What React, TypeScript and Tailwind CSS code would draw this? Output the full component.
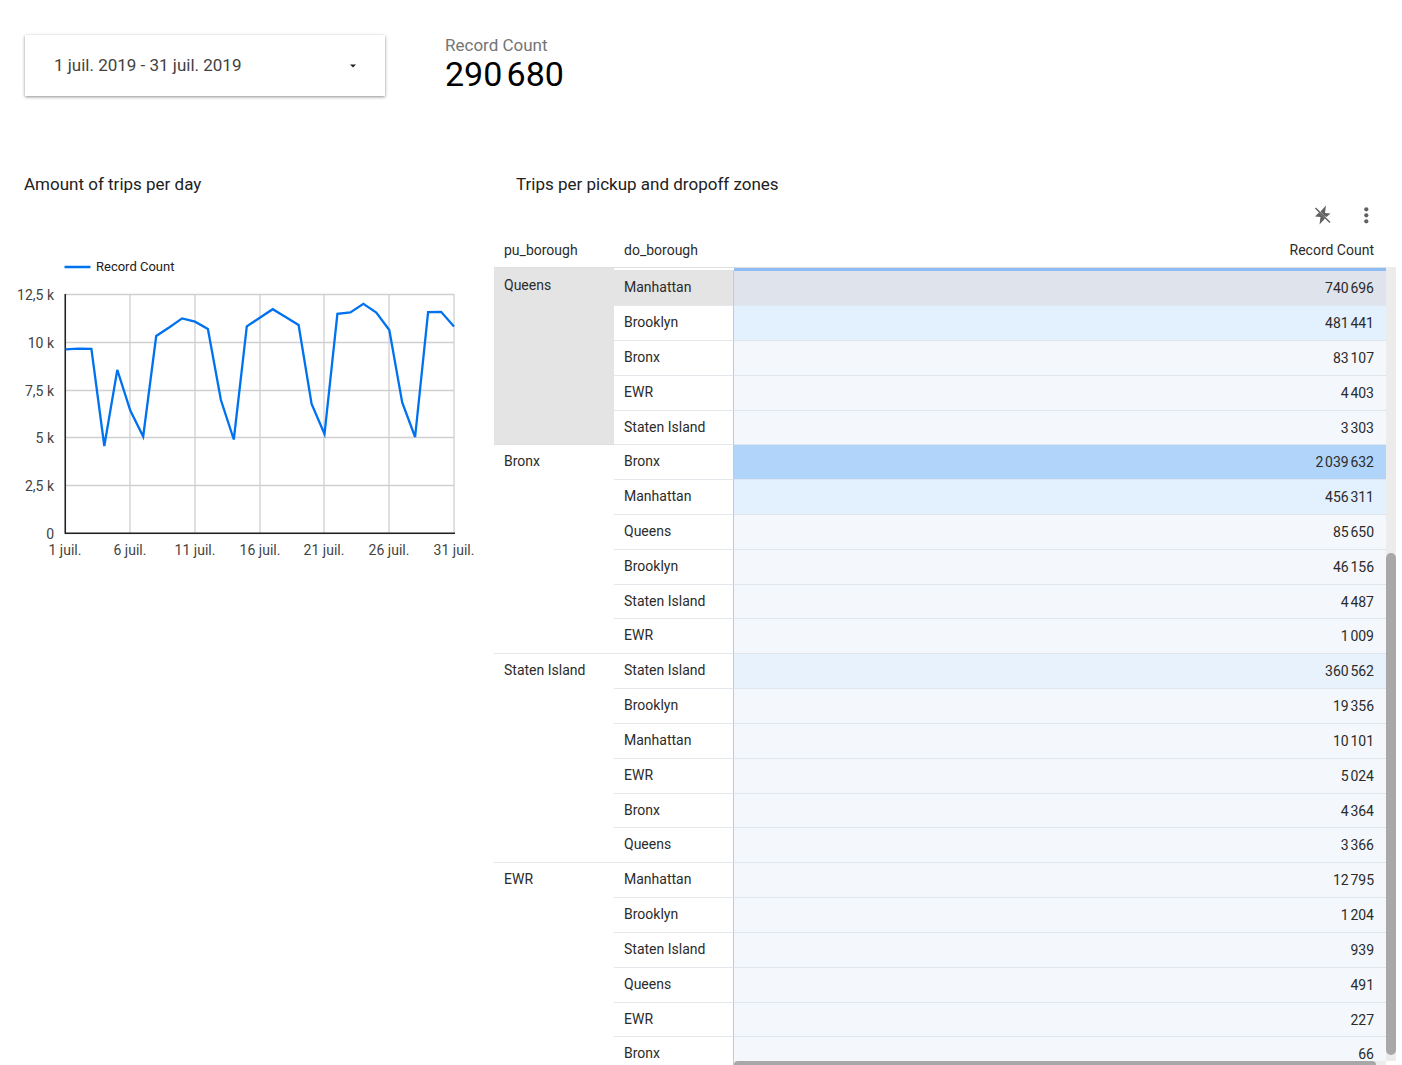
import React from "react";

type Row = { zone: string; count: string; tone: string };
type Group = { borough: string; rows: Row[] };

const PALE = "bg-[#f4f8fd]";
const LIGHT = "bg-[#e3f0fd]";

const groups: Group[] = [
  {
    borough: "Queens",
    rows: [
      { zone: "Manhattan", count: "740696", tone: "bg-[#dfe3eb]" },
      { zone: "Brooklyn", count: "481441", tone: LIGHT },
      { zone: "Bronx", count: "83107", tone: PALE },
      { zone: "EWR", count: "4403", tone: PALE },
      { zone: "Staten Island", count: "3303", tone: PALE },
    ],
  },
  {
    borough: "Bronx",
    rows: [
      { zone: "Bronx", count: "2039632", tone: "bg-[#b0d4fa]" },
      { zone: "Manhattan", count: "456311", tone: LIGHT },
      { zone: "Queens", count: "85650", tone: PALE },
      { zone: "Brooklyn", count: "46156", tone: PALE },
      { zone: "Staten Island", count: "4487", tone: PALE },
      { zone: "EWR", count: "1009", tone: PALE },
    ],
  },
  {
    borough: "Staten Island",
    rows: [
      { zone: "Staten Island", count: "360562", tone: "bg-[#e8f2fd]" },
      { zone: "Brooklyn", count: "19356", tone: PALE },
      { zone: "Manhattan", count: "10101", tone: PALE },
      { zone: "EWR", count: "5024", tone: PALE },
      { zone: "Bronx", count: "4364", tone: PALE },
      { zone: "Queens", count: "3366", tone: PALE },
    ],
  },
  {
    borough: "EWR",
    rows: [
      { zone: "Manhattan", count: "12795", tone: PALE },
      { zone: "Brooklyn", count: "1204", tone: PALE },
      { zone: "Staten Island", count: "939", tone: PALE },
      { zone: "Queens", count: "491", tone: PALE },
      { zone: "EWR", count: "227", tone: PALE },
      { zone: "Bronx", count: "66", tone: PALE },
    ],
  },
];

const group3 = (n: string) => n.replace(/\B(?=(\d{3})+$)/g, "\u202f");

const trips = [
  9630, 9665, 9655, 4560, 8550, 6420, 5060, 10325, 10770, 11250, 11075, 10690, 6970, 4900, 10830, 11285,
  11730, 11320, 10900, 6760, 5190, 11490, 11555, 12010, 11555, 10640, 6840, 5030, 11570, 11595, 10830,
];

const yTicks = [
  { label: "12,5 k", y: 294 },
  { label: "10 k", y: 342 },
  { label: "7,5 k", y: 390 },
  { label: "5 k", y: 437 },
  { label: "2,5 k", y: 485 },
  { label: "0", y: 533 },
];
const xTicks = [
  { label: "1 juil.", x: 65 },
  { label: "6 juil.", x: 130 },
  { label: "11 juil.", x: 195 },
  { label: "16 juil.", x: 260 },
  { label: "21 juil.", x: 324 },
  { label: "26 juil.", x: 389 },
  { label: "31 juil.", x: 454 },
];

function TripsChart() {
  const points = trips
    .map((v, i) => `${(65.5 + (i * 388.5) / 30).toFixed(1)},${(533 - (v * 238.5) / 12500).toFixed(1)}`)
    .join(" ");
  return (
    <svg viewBox="0 250 494 320" className="block w-full" role="img" aria-label="Amount of trips per day">
      <path d="M64.500 267h26" stroke="#0072f0" strokeWidth="2.500" />
      <text x="96" y="271" fontSize="13" fill="#212121">Record Count</text>
      <g stroke="#d0d0d0" strokeWidth="1.300">
        {yTicks.map((t) => (
          <path key={t.label} d={`M65 ${t.y + 0.5}H454`} />
        ))}
        {xTicks.map((t) => (
          <path key={t.label} d={`M${t.x} 294V533`} />
        ))}
      </g>
      <path d="M65.300 294V533.300H455" fill="none" stroke="#222" strokeWidth="1.500" />
      <polyline points={points} fill="none" stroke="#0072f0" strokeWidth="2.300" />
      <g fontSize="14" fill="#424242">
        {yTicks.map((t) => (
          <text key={t.label} x="54" y={t.y + 6} textAnchor="end">{t.label}</text>
        ))}
        {xTicks.map((t) => (
          <text key={t.label} x={t.x} y="555" textAnchor="middle">{t.label}</text>
        ))}
      </g>
    </svg>
  );
}

function BoroughTable() {
  return (
    <table className="w-full table-fixed border-separate border-spacing-0 text-sm text-[#2b2b2b]">
      <colgroup>
        <col className="w-[120px]" />
        <col className="w-[120px]" />
        <col />
      </colgroup>
      <thead>
        <tr className="h-[37px] text-left">
          <th scope="col" className="border-b border-[#e0e0e0] px-[10px] pt-[2px] font-normal">pu_borough</th>
          <th scope="col" className="border-b border-[#e0e0e0] px-[10px] pt-[2px] font-normal">do_borough</th>
          <th scope="col" className="border-b border-[#e0e0e0] px-3 pt-[2px] text-right font-normal">Record Count</th>
        </tr>
      </thead>
      {groups.map((g, gi) => (
        <tbody key={g.borough}>
          {gi === 0 && (
            <tr className="h-[3px]">
              <th
                scope="rowgroup"
                rowSpan={g.rows.length + 1}
                className="border-b border-[#e0e0e0] bg-[#e4e4e4] px-[10px] pt-[7px] text-left align-top font-normal"
              >
                {g.borough}
              </th>
              <td className="border-b border-[#e4e4e4] p-0" />
              <td className="bg-[#8dbdf3] p-0" />
            </tr>
          )}
          {g.rows.map((r, i) => (
            <tr key={r.zone} className={i === 4 ? "h-[34px]" : "h-[35px]"}>
              {gi > 0 && i === 0 && (
                <th
                  scope="rowgroup"
                  rowSpan={g.rows.length}
                  className="border-b border-[#e4e8ec] px-[10px] pt-[6px] text-left align-top font-normal"
                >
                  {g.borough}
                </th>
              )}
              <td
                className={`border-r border-b border-r-[#c6c8ca] border-b-[#e4e8ec] px-[10px] pt-[6px] pb-0 align-top ${
                  gi === 0 && i === 0 ? "bg-[#e4e4e4]" : ""
                }`}
              >
                {r.zone}
              </td>
              <td className={`border-b border-[#dfe5ec] px-3 py-0 text-right ${r.tone}`}>{group3(r.count)}</td>
            </tr>
          ))}
        </tbody>
      ))}
    </table>
  );
}

export default function App() {
  return (
    <main className="flex h-screen flex-col overflow-hidden bg-white font-['Roboto',sans-serif] text-[#212121]">
      <header className="flex items-start gap-[60px] pt-[35px] pl-[25px]">
        <button
          type="button"
          className="flex h-[61px] w-[360px] items-center justify-between bg-white pr-7 pl-[29px] text-[17px] text-[#424242] shadow-[0_1px_3px_rgba(0,0,0,0.45)]"
        >
          1 juil. 2019 - 31 juil. 2019
          <svg viewBox="0 0 8 4" className="h-1 w-2" aria-hidden="true">
            <path d="M1 0.500h6L4 3.500z" fill="#222" />
          </svg>
        </button>
        <div>
          <div className="text-[17px] leading-5 text-[#757575]">Record Count</div>
          <div className="text-[34px] leading-[38px] text-black">{group3("290680")}</div>
        </div>
      </header>

      <div className="flex min-h-0 flex-1 pt-[78px]">
        <section className="w-[494px] shrink-0">
          <h2 className="pl-6 text-[17px] leading-5">Amount of trips per day</h2>
          <div className="pt-14">
            <TripsChart />
          </div>
        </section>

        <section className="flex min-w-0 flex-1 flex-col pr-[6px]">
          <h2 className="pl-[22px] text-[17px] leading-5">Trips per pickup and dropoff zones</h2>
          <div className="flex justify-end gap-5 pt-[9px] pr-[18px] text-[#616161]">
            <button type="button" aria-label="Accelerator off" className="flex size-6 items-center justify-center">
              <svg viewBox="0 0 24 24" className="size-6" aria-hidden="true">
                <path d="M16 2.500 10.500 8.500 14 12.500 16.500 14 20.500 10.500 15 10z" fill="currentColor" />
                <path d="M9 9.500 5 13.500 10.500 14 9.500 21.500 15 15.500z" fill="currentColor" />
                <path d="M5.500 5 20 19.500" stroke="currentColor" strokeWidth="1.500" />
              </svg>
            </button>
            <button type="button" aria-label="More options" className="flex size-6 items-center justify-center">
              <svg viewBox="0 0 24 24" className="size-6" fill="currentColor" aria-hidden="true">
                <circle cx="12.300" cy="6.300" r="2.100" />
                <circle cx="12.300" cy="12.300" r="2.100" />
                <circle cx="12.300" cy="18.300" r="2.100" />
              </svg>
            </button>
          </div>
          <div className="relative flex min-h-0 flex-1 overflow-hidden pt-1">
            <div className="min-w-0 flex-1">
              <BoroughTable />
            </div>
            <div className="mt-9 mb-1 flex w-[10px] flex-col justify-end bg-[#ececec] pb-[6px]">
              <div className="h-[502px] rounded-full bg-[#a8a8a8]" />
            </div>
            <div className="absolute right-[10px] bottom-0 left-60 h-1 bg-[#ececec] pr-[10px]">
              <div className="h-full rounded-t-md bg-[#a8a8a8]" />
            </div>
          </div>
        </section>
      </div>
    </main>
  );
}
